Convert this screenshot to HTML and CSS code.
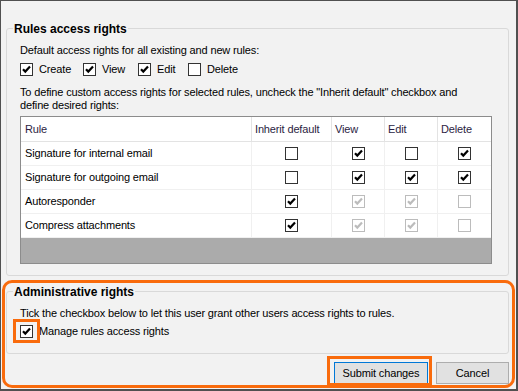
FILE: index.html
```html
<!DOCTYPE html>
<html>
<head>
<meta charset="utf-8">
<link rel="stylesheet" href="styles.css">
</head>
<body>
<svg class="defs" width="0" height="0">
  <symbol id="chk" viewBox="0 0 11 11">
    <path d="M2 5.2 L4.3 7.6 L9 2.6" fill="none" stroke-width="2.2" stroke-linejoin="miter" stroke-linecap="butt"/>
  </symbol>
</svg>
<div class="window">
  <section class="group group-rules">
    <div class="group-title">Rules access rights</div>
    <p class="text">Default access rights for all existing and new rules:</p>
    <div class="opts">
      <label class="opt opt-create"><span class="cb"><svg class="mark"><use href="#chk"/></svg></span>Create</label>
      <label class="opt opt-view"><span class="cb"><svg class="mark"><use href="#chk"/></svg></span>View</label>
      <label class="opt opt-edit"><span class="cb"><svg class="mark"><use href="#chk"/></svg></span>Edit</label>
      <label class="opt"><span class="cb"></span>Delete</label>
    </div>
    <p class="text text-2">To define custom access rights for selected rules, uncheck the "Inherit default" checkbox and<br>define desired rights:</p>
    <div class="grid">
      <table class="rules">
        <colgroup>
          <col class="c-rule"><col class="c-inherit"><col class="c-small"><col class="c-small"><col class="c-last">
        </colgroup>
        <thead>
          <tr>
            <th class="name">Rule</th>
            <th>Inherit default</th>
            <th>View</th>
            <th>Edit</th>
            <th class="last">Delete</th>
          </tr>
        </thead>
        <tbody>
          <tr>
            <td class="name">Signature for internal email</td>
            <td><span class="cb"></span></td>
            <td><span class="cb"><svg class="mark"><use href="#chk"/></svg></span></td>
            <td><span class="cb"></span></td>
            <td class="last"><span class="cb"><svg class="mark"><use href="#chk"/></svg></span></td>
          </tr>
          <tr>
            <td class="name">Signature for outgoing email</td>
            <td><span class="cb"></span></td>
            <td><span class="cb"><svg class="mark"><use href="#chk"/></svg></span></td>
            <td><span class="cb"><svg class="mark"><use href="#chk"/></svg></span></td>
            <td class="last"><span class="cb"><svg class="mark"><use href="#chk"/></svg></span></td>
          </tr>
          <tr>
            <td class="name">Autoresponder</td>
            <td><span class="cb"><svg class="mark"><use href="#chk"/></svg></span></td>
            <td><span class="cb off"><svg class="mark"><use href="#chk"/></svg></span></td>
            <td><span class="cb off"><svg class="mark"><use href="#chk"/></svg></span></td>
            <td class="last"><span class="cb off"></span></td>
          </tr>
          <tr>
            <td class="name">Compress attachments</td>
            <td><span class="cb"><svg class="mark"><use href="#chk"/></svg></span></td>
            <td><span class="cb off"><svg class="mark"><use href="#chk"/></svg></span></td>
            <td><span class="cb off"><svg class="mark"><use href="#chk"/></svg></span></td>
            <td class="last"><span class="cb off"></span></td>
          </tr>
        </tbody>
      </table>
    </div>
  </section>

  <section class="group group-admin">
    <div class="group-title">Administrative rights</div>
    <p class="text">Tick the checkbox below to let this user grant other users access rights to rules.</p>
    <div class="opts opts-admin">
      <label class="opt"><span class="cb"><svg class="mark"><use href="#chk"/></svg></span>Manage rules access rights</label>
    </div>
  </section>

  <div class="buttons">
    <button class="btn btn-submit">Submit changes</button>
    <button class="btn btn-cancel">Cancel</button>
  </div>

  <div class="hl hl-admin"></div>
  <div class="hl hl-check"></div>
  <div class="hl hl-submit"></div>
</div>
</body>
</html>
```

FILE: styles.css
```css
* {
  box-sizing: border-box;
}

body {
  margin: 0;
  font-family: "Liberation Sans", Arial, sans-serif;
  font-size: 11px;
  color: #000;
}

.defs {
  position: absolute;
  width: 0;
  height: 0;
}

.window {
  position: relative;
  width: 518px;
  height: 391px;
  background: #f2f2f2;
  border-style: solid;
  border-color: #505050;
  border-width: 1px 2px 2px 1px;
  padding-top: 27px;
}

.group {
  width: 503px;
  margin-left: 5px;
  border: 1px solid #d9d9d9;
  border-radius: 3px;
  padding: 0 0 11px 13px;
}

.group-admin {
  margin-top: 15px;
  padding-bottom: 15px;
}

.group-title {
  width: fit-content;
  margin: -7px 0 0 -7px;
  padding: 0 1px;
  background: #f2f2f2;
  font-size: 12px;
  font-weight: bold;
  line-height: 14px;
}

.text {
  margin: 8px 0 0;
  line-height: 13px;
  letter-spacing: -0.15px;
}

.text-2 {
  margin-top: 10px;
}

.opts {
  display: flex;
  align-items: center;
  height: 13px;
  margin-top: 6px;
  line-height: 13px;
  letter-spacing: -0.15px;
}

.opts-admin {
  margin-top: 5px;
}

.opt {
  display: flex;
  align-items: center;
  gap: 6px;
}

.opt-create {
  width: 63px;
}

.opt-view {
  width: 55px;
}

.opt-edit {
  width: 50px;
}

.cb {
  display: inline-flex;
  align-items: center;
  justify-content: center;
  width: 13px;
  height: 13px;
  border: 1px solid #333;
  background: #fff;
  flex: none;
  vertical-align: top;
}

.mark {
  width: 11px;
  height: 11px;
  stroke: #000;
}

.cb.off {
  border-color: #bcbcbc;
}

.cb.off .mark {
  stroke: #bcbcbc;
}

.grid {
  width: 472px;
  height: 148px;
  margin-top: 4px;
  border: 1px solid #8c8c8c;
  background: #ababab;
}

.rules {
  width: 470px;
  table-layout: fixed;
  border-collapse: separate;
  border-spacing: 0;
  background: #fff;
}

.c-rule {
  width: 231px;
}

.c-inherit {
  width: 80px;
}

.c-small,
.c-last {
  width: 53px;
}

.rules th,
.rules td {
  padding: 0;
  line-height: 13px;
  letter-spacing: -0.15px;
  white-space: nowrap;
  overflow: hidden;
}

.rules th {
  height: 25px;
  padding-left: 3px;
  text-align: left;
  font-weight: normal;
  color: #2b1d42;
  border-right: 1px solid #e3e3e3;
  border-bottom: 1px solid #e3e3e3;
}

.rules td {
  height: 24px;
  text-align: center;
  border-right: 1px solid #f0f0f0;
  border-bottom: 1px solid #f0f0f0;
}

.rules td .cb {
  vertical-align: middle;
}

.rules .name {
  padding-left: 4px;
  text-align: left;
}

.rules .last {
  border-right: none;
}

.buttons {
  display: flex;
  justify-content: flex-end;
  gap: 8px;
  width: 503px;
  margin: 8px 0 0 5px;
}

.btn {
  height: 22px;
  padding: 0;
  background: #e1e1e1;
  border: 1px solid #adadad;
  font-family: "Liberation Sans", Arial, sans-serif;
  font-size: 11px;
  letter-spacing: -0.15px;
  color: #000;
}

.btn-submit {
  width: 94px;
  border-color: #0078d7;
}

.btn-cancel {
  width: 73px;
}

.hl {
  position: absolute;
  border: 3px solid #f96b0c;
}

.hl-admin {
  left: 1px;
  top: 279px;
  width: 513px;
  height: 108px;
  border-radius: 10px;
}

.hl-check {
  left: 12px;
  top: 318px;
  width: 27px;
  height: 24px;
}

.hl-submit {
  left: 326px;
  top: 355px;
  width: 105px;
  height: 30px;
}
```
